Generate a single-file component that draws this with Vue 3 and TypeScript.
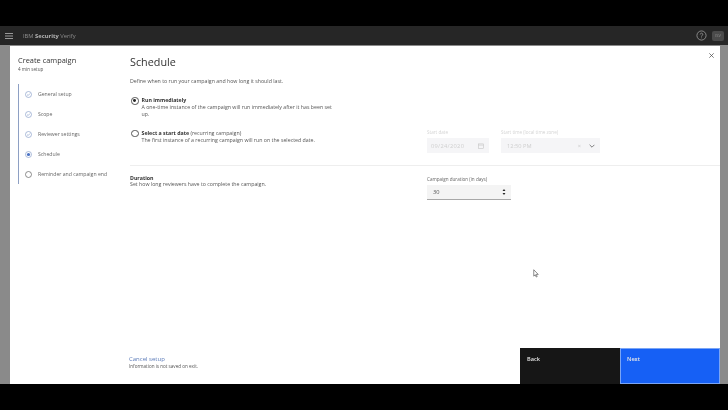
<template>
  <div class="page">
    <div class="letterbox"></div>
    <header class="topbar">
      <svg class="menu-icon" viewBox="0 0 10 8" width="10" height="8"><path d="M1 1.500h8M1 4h8M1 6.500h8" stroke="#b8b8b8" stroke-width="0.800" fill="none" /></svg>
      <span class="brand">IBM <b>Security</b> Verify</span>
      <svg class="help-icon" viewBox="0 0 12 12" width="11" height="11" fill="none" stroke="#a8a8a8" stroke-width="0.800">
        <circle cx="6" cy="6" r="5" />
        <path d="M4.600 4.800a1.400 1.400 0 1 1 2.200 1.200c-.5.300-.8.500-.8 1.100M6 8.200v.8" />
      </svg>
      <span class="avatar">ISV</span>
    </header>
    <div class="stage">
      <div class="modal">
        <div class="content">
          <aside class="sidebar">
            <h2>Create campaign</h2>
            <p class="setup-time">4 min setup</p>
            <ul class="steps">
              <li v-for="step in steps" :key="step.label" class="step">
                <svg viewBox="0 0 10 10" width="7" height="7" fill="none">
                  <circle cx="5" cy="5" r="4.300" :stroke="step.state === 'todo' ? '#525252' : '#7f97c6'" stroke-width="0.900" />
                  <path v-if="step.state === 'done'" d="M3 5.100l1.500 1.400 2.500-2.800" stroke="#7f97c6" stroke-width="0.900" />
                  <circle v-if="step.state === 'current'" cx="5" cy="5" r="2.300" fill="#4a72c4" />
                </svg>
                <span>{{ step.label }}</span>
              </li>
            </ul>
          </aside>
          <main class="main">
            <h1>Schedule</h1>
            <p class="intro">Define when to run your campaign and how long it should last.</p>
            <div class="when">
              <div class="options">
                <div class="option">
                  <span class="radio checked"></span>
                  <div>
                    <div class="option-title"><b>Run immediately</b></div>
                    <div class="option-text">A one-time instance of the campaign will run immediately after it has been set up.</div>
                  </div>
                </div>
                <div class="option second">
                  <span class="radio"></span>
                  <div>
                    <div class="option-title"><b>Select a start date</b> (recurring campaign)</div>
                    <div class="option-text">The first instance of a recurring campaign will run on the selected date.</div>
                  </div>
                </div>
              </div>
              <div class="fields">
                <div class="field">
                  <label>Start date</label>
                  <div class="input date">
                    <span>09/24/2020</span>
                    <svg viewBox="0 0 10 10" width="6" height="6" fill="none" stroke="#c0c0c0" stroke-width="0.900"><rect x="1" y="1.500" width="8" height="7.500" /><path d="M1 3.500h8" /></svg>
                  </div>
                </div>
                <div class="field">
                  <label>Start time (local time zone)</label>
                  <div class="input time">
                    <span>12:50 PM</span>
                    <span class="clear">×</span>
                    <svg viewBox="0 0 10 6" width="6" height="4" fill="none" stroke="#525252" stroke-width="1.200"><path d="M1 1l4 4 4-4" /></svg>
                  </div>
                </div>
              </div>
            </div>
            <div class="duration">
              <div class="duration-copy">
                <div class="duration-title">Duration</div>
                <div class="option-text">Set how long reviewers have to complete the campaign.</div>
              </div>
              <div class="field duration-field">
                <label class="dark">Campaign duration (in days)</label>
                <div class="input number">
                  <span>30</span>
                  <svg viewBox="0 0 6 10" width="4" height="8" fill="#262626"><path d="M3 .5l2.200 3H.8zM3 9.500l-2.200-3h4.400z" /></svg>
                </div>
              </div>
            </div>
          </main>
          <svg class="close" viewBox="0 0 8 8" width="5" height="5" stroke="#444" stroke-width="1.100"><path d="M.5.500l7 7M7.500.500l-7 7" /></svg>
          <svg class="cursor" viewBox="0 0 8 12" width="6" height="9" fill="#fff" stroke="#555" stroke-width="0.900"><path d="M1 1v8.500l2-1.800 1.300 3 1.300-.6-1.300-2.900h2.700z" /></svg>
        </div>
        <footer class="footer">
          <div class="cancel">
            <a>Cancel setup</a>
            <p>Information is not saved on exit.</p>
          </div>
          <div class="actions">
            <button class="back">Back</button>
            <button class="next">Next</button>
          </div>
        </footer>
      </div>
    </div>
    <div class="letterbox"></div>
  </div>
</template>

<script setup lang="ts">
interface Step {
  label: string;
  state: "done" | "current" | "todo";
}

const steps: Step[] = [
  { label: "General setup", state: "done" },
  { label: "Scope", state: "done" },
  { label: "Reviewer settings", state: "done" },
  { label: "Schedule", state: "current" },
  { label: "Reminder and campaign end", state: "todo" },
];
</script>

<style>
html,
body {
  margin: 0;
  background: #000;
}
</style>

<style scoped>
.page {
  display: flex;
  flex-direction: column;
  width: 728px;
  height: 410px;
  overflow: hidden;
  background: #000;
  color: #2a2a2a;
  font-family: "Open Sans", "Noto Sans", sans-serif;
  filter: blur(0.4px);
}

.letterbox {
  height: 26px;
  flex-shrink: 0;
  background: #000;
}

.topbar {
  display: flex;
  align-items: center;
  height: 19px;
  flex-shrink: 0;
  padding: 0 4px 0 4px;
  background: #262626;
  box-sizing: border-box;
}

.brand {
  flex: 1;
  margin-left: 9px;
  font-size: 5.800px;
  color: #8d8d8d;
}

.brand b {
  color: #b5b5b5;
}

.help-icon {
  margin-right: 5px;
}

.avatar {
  display: flex;
  align-items: center;
  justify-content: center;
  width: 12px;
  height: 10px;
  border-radius: 2px;
  background: #4a4a4a;
  font-size: 4px;
  color: #8d8d8d;
}

.stage {
  flex: 1;
  display: flex;
  min-height: 0;
  padding: 0 8px 0 9.500px;
  background: #8a8a8a;
}

.modal {
  flex: 1;
  display: flex;
  flex-direction: column;
  background: #fff;
  border-top: 1px solid #8a8a8a;
}

.content {
  position: relative;
  flex: 1;
  display: flex;
  min-height: 0;
}

.sidebar {
  width: 120.500px;
  flex-shrink: 0;
  padding: 9px 0 0 8.500px;
  box-sizing: border-box;
}

.sidebar h2 {
  margin: 0;
  font-size: 7.400px;
  line-height: 11px;
  font-weight: 400;
  color: #333;
}

.setup-time {
  margin: 0;
  font-size: 4.600px;
  line-height: 6px;
  color: #555;
}

.steps {
  margin: 12px 0 0;
  padding: 0;
  list-style: none;
  border-left: 1px solid #8ea0c4;
}

.step {
  display: flex;
  align-items: center;
  gap: 6px;
  height: 20px;
  padding-left: 6px;
  font-size: 5.150px;
  color: #666;
  white-space: nowrap;
}

.main {
  flex: 1;
  min-width: 0;
}

.main h1 {
  margin: 9px 0 0;
  font-size: 10.800px;
  line-height: 14px;
  font-weight: 400;
  color: #333;
}

.intro {
  margin: 9px 0 0;
  font-size: 5.250px;
  line-height: 7px;
  color: #555;
}

.when {
  display: flex;
  height: 69px;
  margin-top: 12px;
  border-bottom: 1px solid #eee;
  box-sizing: border-box;
}

.options {
  width: 297px;
  flex-shrink: 0;
}

.option {
  display: flex;
  gap: 3px;
  width: 204px;
  margin-left: 1px;
}

.option.second {
  margin-top: 11.500px;
}

.radio {
  position: relative;
  width: 7.500px;
  height: 7.500px;
  flex-shrink: 0;
  border: 0.800px solid #555;
  border-radius: 50%;
  box-sizing: border-box;
}

.radio.checked::after {
  content: "";
  position: absolute;
  inset: 1.300px;
  border-radius: 50%;
  background: #262626;
}

.option-title {
  font-size: 5.250px;
  line-height: 7px;
  color: #555;
}

.option-title b {
  color: #333;
}

.option-text {
  font-size: 5.250px;
  line-height: 7px;
  color: #555;
}

.fields {
  display: flex;
  gap: 12px;
  margin-top: 32px;
}

.field label {
  display: block;
  margin-bottom: 3px;
  font-size: 4.600px;
  line-height: 6px;
  color: #d4d4d4;
}

.field label.dark {
  color: #666;
}

.input {
  display: flex;
  align-items: center;
  height: 15px;
  padding: 0 5px 0 6px;
  box-sizing: border-box;
  background: #f4f4f4;
  font-size: 5.700px;
  color: #cfcfcf;
}

.input span:first-child {
  flex: 1;
}

.date {
  width: 62px;
  padding-left: 4px;
  letter-spacing: 0.300px;
  background: #f5f5f7;
}

.time {
  width: 99px;
  background: #f5f5f7;
}

.clear {
  margin-right: 8px;
  color: #c8c8c8;
}

.number {
  width: 84px;
  color: #555;
  border-bottom: 1px solid #a8a8a8;
}

.duration {
  display: flex;
  margin-top: 6px;
}

.duration-copy {
  width: 297px;
  flex-shrink: 0;
  padding-top: 2.500px;
}

.duration-field {
  padding-top: 3.500px;
}

.duration-title {
  font-size: 5.250px;
  line-height: 6.500px;
  font-weight: 700;
  color: #333;
}

.close {
  position: absolute;
  top: 7px;
  right: 6px;
}

.cursor {
  position: absolute;
  left: 523px;
  top: 223px;
}

.footer {
  display: flex;
  align-items: flex-end;
  justify-content: space-between;
  height: 36px;
  flex-shrink: 0;
}

.cancel {
  padding: 0 0 15px 119.500px;
}

.cancel a {
  display: block;
  font-size: 6px;
  line-height: 8px;
  color: #5a7ab8;
}

.cancel p {
  margin: 0;
  font-size: 4.600px;
  line-height: 6px;
  color: #555;
}

.actions {
  display: flex;
  height: 36px;
}

.actions button {
  display: flex;
  align-items: flex-start;
  width: 100px;
  height: 36px;
  padding: 7px 0 0 7px;
  border: 0;
  box-sizing: border-box;
  font-family: inherit;
  font-size: 5.600px;
  font-weight: 600;
  line-height: 8px;
  color: #e8e8e8;
}

.back {
  background: #161616;
}

.next {
  background: #1660f5;
  outline: 1px solid #7aa5f5;
  outline-offset: -1px;
}
</style>
